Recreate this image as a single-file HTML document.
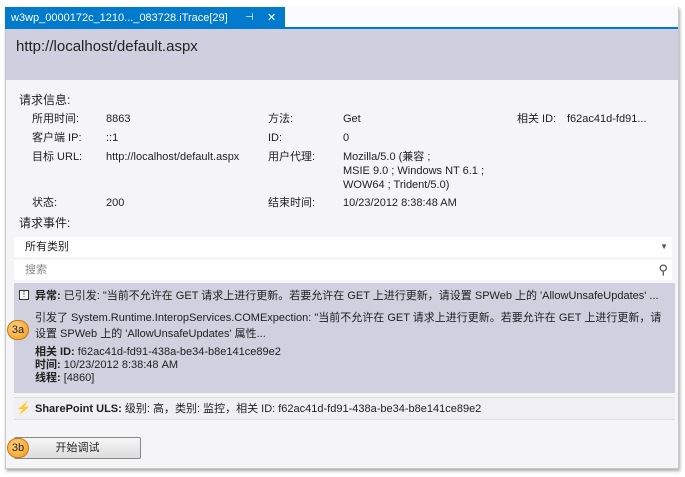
<html><head><style>
body{margin:0;width:685px;height:477px;background:#fff;font-family:"Liberation Sans","Noto Sans CJK SC",sans-serif;font-size:11px;color:#1e1e1e;position:relative;overflow:hidden}
.a{position:absolute;white-space:nowrap;line-height:14px}
.frame{position:absolute;left:5px;top:7px;width:672px;height:460px;background:#f5f5f7;border:1px solid #c8c8c8;box-shadow:1px 2px 3px #aaa}
.badge{position:absolute;width:20px;height:18px;border-radius:10px;background:radial-gradient(circle at 40% 35%,#ffd080,#f29a1c);border:1px solid #c77a10;font-size:11px;text-align:center;line-height:18px;color:#222}
</style></head><body>
<div class="frame"></div>
<div class="a" style="left:5px;top:7px;width:280px;height:22px;background:#007acc;color:#fff;font-size:11px;line-height:22px;padding-left:6px;box-sizing:border-box">w3wp_0000172c_1210..._083728.iTrace[29]</div>
<div class="a" style="left:245px;top:7px;line-height:22px;color:#fff;font-size:10px">⊣</div>
<div class="a" style="left:267px;top:7px;line-height:22px;color:#fff;font-size:11px">✕</div>
<div class="a" style="left:285px;top:7px;width:393px;height:22px;background:#fbfbfd;border-bottom:2px solid #007acc;box-sizing:border-box"></div>
<div class="a" style="left:6px;top:29px;width:672px;height:51px;background:#cfcfdf"></div>
<div class="a" style="left:16px;top:38px;font-size:15px;line-height:18px;color:#222">http://localhost/default.aspx</div>
<div class="a" style="left:19px;top:93px;font-size:12px">请求信息:</div>
<div class="a" style="left:32px;top:112px">所用时间:</div><div class="a" style="left:106px;top:112px">8863</div>
<div class="a" style="left:268px;top:112px">方法:</div><div class="a" style="left:343px;top:112px">Get</div>
<div class="a" style="left:517px;top:112px">相关 ID:</div><div class="a" style="left:567px;top:112px">f62ac41d-fd91...</div>
<div class="a" style="left:32px;top:131px">客户端 IP:</div><div class="a" style="left:106px;top:131px">::1</div>
<div class="a" style="left:268px;top:131px">ID:</div><div class="a" style="left:343px;top:131px">0</div>
<div class="a" style="left:32px;top:150px">目标 URL:</div><div class="a" style="left:106px;top:150px">http://localhost/default.aspx</div>
<div class="a" style="left:268px;top:150px">用户代理:</div><div class="a" style="left:343px;top:150px">Mozilla/5.0 (兼容 ;<br>MSIE 9.0 ; Windows NT 6.1 ;<br>WOW64 ; Trident/5.0)</div>
<div class="a" style="left:32px;top:196px">状态:</div><div class="a" style="left:106px;top:196px">200</div>
<div class="a" style="left:268px;top:196px">结束时间:</div><div class="a" style="left:343px;top:196px">10/23/2012 8:38:48 AM</div>
<div class="a" style="left:19px;top:216px;font-size:12px">请求事件:</div>
<div class="a" style="left:14px;top:237px;width:658px;height:20px;background:#fff;line-height:20px;padding-left:11px;box-sizing:border-box">所有类别<span style="position:absolute;right:4px;font-size:8px;color:#555">▼</span></div>
<div class="a" style="left:14px;top:260px;width:658px;height:20px;background:#fff;line-height:20px;padding-left:11px;box-sizing:border-box;color:#888">搜索<span style="position:absolute;right:4px;color:#444;font-size:13px">⚲</span></div>
<div class="a" style="left:14px;top:283px;width:661px;height:110px;background:#d0d0de"></div>
<div class="a" style="left:19px;top:290px;width:8px;height:8px;border:1px solid #333;font-size:8px;line-height:8px;text-align:center;background:#fff">!</div>
<div class="a" style="left:35px;top:289px"><b>异常:</b> 已引发: "当前不允许在 GET 请求上进行更新。若要允许在 GET 上进行更新，请设置 SPWeb 上的 'AllowUnsafeUpdates' ...</div>
<div class="a" style="left:35px;top:310px;line-height:16px">引发了 System.Runtime.InteropServices.COMExpection: "当前不允许在 GET 请求上进行更新。若要允许在 GET 上进行更新，请<br>设置 SPWeb 上的 'AllowUnsafeUpdates' 属性...</div>
<div class="a" style="left:35px;top:346px;line-height:13px"><b>相关 ID:</b> f62ac41d-fd91-438a-be34-b8e141ce89e2<br><b>时间:</b> 10/23/2012 8:38:48 AM<br><b>线程:</b> [4860]</div>
<div class="badge" style="left:7px;top:320px">3a</div>
<div class="a" style="left:14px;top:397px;width:661px;height:21px;border-top:1px solid #ddd;border-bottom:1px solid #ddd;background:#f0f0f4"></div>
<div class="a" style="left:16px;top:401px;color:#e8a020;font-size:12px">⚡</div>
<div class="a" style="left:35px;top:402px"><b>SharePoint ULS:</b> 级别: 高，类别: 监控，相关 ID: f62ac41d-fd91-438a-be34-b8e141ce89e2</div>
<div class="a" style="left:14px;top:437px;width:125px;height:20px;border:1px solid #888;border-radius:2px;background:linear-gradient(#f6f6f6,#dcdcdc);text-align:center;line-height:20px">开始调试</div>
<div class="badge" style="left:7px;top:438px">3b</div>
</body></html>
